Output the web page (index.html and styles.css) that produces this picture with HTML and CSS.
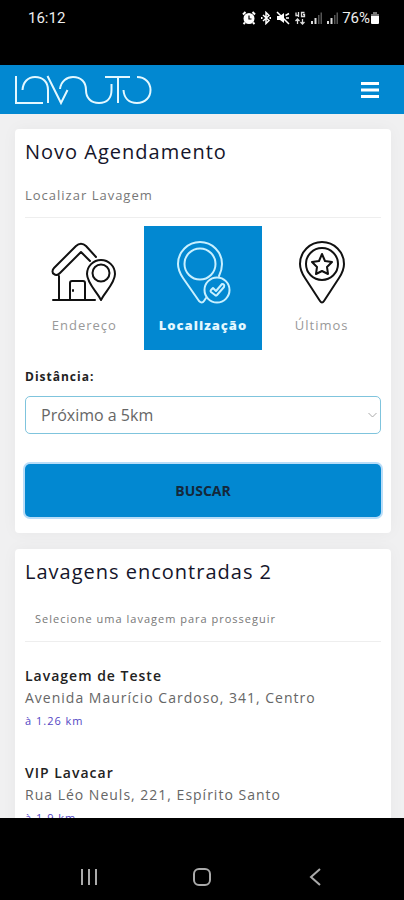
FILE: index.html
```html
<!DOCTYPE html>
<html lang="pt-BR">
<head>
<meta charset="utf-8">
<meta name="viewport" content="width=device-width, initial-scale=1">
<title>Lavauto - Novo Agendamento</title>
<link rel="stylesheet" href="styles.css">
</head>
<body>
<div class="status">
  <time>16:12</time>
  <div class="status-icons">
    <svg width="14" height="14" viewBox="0 0 14 14" fill="none" stroke="#fff"><circle cx="7" cy="7.500" r="4.500" fill="#fff" stroke-width="2"/><path d="M1 3.500 3.500 1M13 3.500 10.500 1M3 11.500 1.500 13M11 11.500 12.500 13" stroke-width="2"/><path d="M7 4.500V8H9.500" stroke="#000" stroke-width="1.200"/></svg>
    <svg width="12" height="14" viewBox="0 0 12 14" fill="none" stroke="#fff" stroke-width="1.500"><path d="M3 4 9 9.500 6 12.500V1.500L9 4.500 3 10"/><path d="M1 7h1.500M9.500 7H11" stroke-width="2"/></svg>
    <svg width="14" height="14" viewBox="0 0 14 14" fill="none" stroke="#fff" stroke-width="1.500"><path d="M1 5h3l4-3v10L4 9H1z" fill="#fff" stroke="none"/><path d="M1 1 13 13M9.500 4.500 13 2.500M10 7h3"/></svg>
    <svg width="12" height="14" viewBox="0 0 12 14" fill="none" stroke="#ddd" stroke-width="1.300"><path d="M2 1.500v3h3M4.500 1v5M10.500 1.500h-3v4h3v-2H9M3.500 13V8M1.500 10l2-2 2 2M8.500 8v5M6.500 11l2 2 2-2"/></svg>
    <svg width="12" height="14" viewBox="0 0 12 14"><path d="M1 10h2v3H1zM4.500 7h2v6h-2z" fill="#ddd"/><path d="M8 4h1.500v9H8zM10.500 1.500H12V13h-1.500z" fill="#555"/></svg>
    <svg width="12" height="14" viewBox="0 0 12 14"><path d="M1 10h2v3H1zM4.500 7h2v6h-2z" fill="#ddd"/><path d="M8 4h1.500v9H8zM10.500 1.500H12V13h-1.500z" fill="#555"/></svg>
    <span class="battery">76%<svg width="10" height="14" viewBox="0 0 10 14"><path d="M3 1h4v2h2v3H1V3h2z" fill="#777"/><path d="M1 5h8v7a1 1 0 0 1-1 1H2a1 1 0 0 1-1-1z" fill="#fff"/></svg></span>
  </div>
</div>

<header class="topbar">
  <a class="logo" href="#" aria-label="Lavauto">
    <svg width="138" height="31" viewBox="0 0 138 31" fill="none" stroke="#e4f8ff" stroke-width="2"><path d="M2 2V29H29M8.500 16C9 8 14 3 21 3 29 3 34 8 34 16V29M33.500 2 47 29 53.500 16M46 15C47 7 53 3 59 3 67 3 72 8 72 16 72 24 77 29 85 29 93 29 97.500 24 97.500 16V10M91 3H116M104 3V29M123 3C131 3 136.500 8.500 136.500 16 136.500 23.500 131 29 123 29 115 29 110 24 109.500 16"/></svg>
  </a>
  <button class="menu" type="button" aria-label="Menu">
    <svg width="20" height="18" viewBox="0 0 20 18"><path d="M1 1h18v3H1zM1 7.500h18v3H1zM1 14h18v3H1z" fill="#fff"/></svg>
  </button>
</header>

<main class="page">
  <section class="card">
    <h1>Novo Agendamento</h1>
    <p class="lead">Localizar Lavagem</p>
    <div class="tabs">
      <button class="tab" type="button">
        <svg width="66" height="66" viewBox="0 0 66 66" fill="none" stroke="#111" stroke-width="2" stroke-linecap="round" stroke-linejoin="round"><path d="M45 17 35 6C32 3 28 3 25 6L3 28C1 30 1 33 3 34 5 36 7 35 9 33L30 12 39 21M8 36V60M2 60H44M19 60V43Q19 41 21 41H32Q34 41 34 43V60M22 50V51"/><path d="M50 60C46 52 36 43 36 34A14 14 0 0 1 64 34C64 43 54 52 50 60Z"/><circle cx="50" cy="33" r="8.500"/></svg>
        <span>Endereço</span>
      </button>
      <button class="tab active" type="button" aria-pressed="true">
        <svg width="66" height="66" viewBox="0 0 66 66" fill="none" stroke="#c9f0ff" stroke-width="2" stroke-linecap="round" stroke-linejoin="round"><path d="M36 58 34 61Q32 64 29 61L13 38C9 32 8 28 8 24A22 22 0 0 1 52 24C52 28 51 32 49 36"/><circle cx="30" cy="24" r="15.500"/><circle cx="47" cy="50" r="12.500"/><path d="M41 50 43 48 46 51 52 44Q55 44 54 47L47 55Q46 56 45 55L41 52Q40 51 41 50Z"/></svg>
        <span>Localização</span>
      </button>
      <button class="tab" type="button">
        <svg width="66" height="66" viewBox="0 0 66 66" fill="none" stroke="#111" stroke-width="2" stroke-linecap="round" stroke-linejoin="round"><path d="M35 61Q33 64 31 61L16 38C12 32 11 28 11 24A22 22 0 0 1 55 24C55 28 54 32 50 38Z"/><circle cx="33" cy="24" r="16"/><path d="m33 14 3 7 7 1-5 5 1 7-6-3-6 3 1-7-5-5 7-1z"/></svg>
        <span>Últimos</span>
      </button>
    </div>
    <label class="field-label" for="distancia">Distância:</label>
    <div class="select-wrap">
      <select id="distancia"><option>Próximo a 5km</option></select>
      <svg class="chevron" width="9" height="6" viewBox="0 0 9 6" fill="none" stroke="#aaa"><path d="M.5 1 4.500 5 8.500 1"/></svg>
    </div>
    <button class="search" type="button">BUSCAR</button>
  </section>

  <section class="card">
    <h2>Lavagens encontradas 2</h2>
    <p class="hint">Selecione uma lavagem para prosseguir</p>
    <ul class="results">
      <li><strong>Lavagem de Teste</strong><span>Avenida Maurício Cardoso, 341, Centro</span><small>à 1.26 km</small></li>
      <li><strong>VIP Lavacar</strong><span>Rua Léo Neuls, 221, Espírito Santo</span><small>à 1.9 km</small></li>
    </ul>
  </section>
</main>

<nav class="sysnav" aria-label="Sistema">
  <button type="button" aria-label="Recentes"><svg width="20" height="20" viewBox="0 0 20 20" stroke="#aaa" stroke-width="2"><path d="M3 2V18M10 2V18M17 2V18"/></svg></button>
  <button type="button" aria-label="Início"><svg width="20" height="20" viewBox="0 0 20 20" fill="none" stroke="#aaa" stroke-width="2"><rect x="2" y="2" width="16" height="16" rx="5"/></svg></button>
  <button type="button" aria-label="Voltar"><svg width="20" height="20" viewBox="0 0 20 20" fill="none" stroke="#aaa" stroke-width="2"><path d="M15 2 6 10 15 18"/></svg></button>
</nav>
</body>
</html>
```
FILE: styles.css
```css
* { box-sizing: border-box; }

body {
  margin: 0;
  height: 100vh;
  display: flex;
  flex-direction: column;
  background: #000;
  color: #666;
  font-family: "Open Sans", sans-serif;
  font-size: 14px;
  letter-spacing: 1px;
}

button {
  margin: 0;
  padding: 0;
  border: 0;
  background: none;
  font: inherit;
  letter-spacing: inherit;
  color: inherit;
}

svg { display: block; }

h1, h2, p, ul { margin: 0; padding: 0; }

.status {
  flex: none;
  height: 65px;
  padding: 8px 24px 0 28px;
  display: flex;
  justify-content: space-between;
  align-items: flex-start;
  color: #eee;
  font: 400 15px/20px Roboto, sans-serif;
  letter-spacing: 0;
}

.status-icons, .battery {
  display: flex;
  align-items: center;
}

.status-icons { gap: 4px; }

.topbar {
  flex: none;
  height: 49px;
  padding: 0 24px 0 14px;
  display: flex;
  align-items: center;
  justify-content: space-between;
  background: #0288d1;
}

.page {
  flex: 1;
  min-height: 0;
  overflow: hidden;
  padding: 15px 13px 0 15px;
  display: flex;
  flex-direction: column;
  gap: 16px;
  background: #f0f0f1;
}

.card {
  flex: none;
  padding: 8px 10px 16px;
  border-radius: 4px;
  background: #fff;
  box-shadow: 0 0 16px rgba(0, 0, 0, 0.04);
}

h1, h2 {
  color: #15152b;
  font-size: 20px;
  font-weight: 400;
  line-height: 30px;
}

.lead, .hint {
  border-bottom: 1px solid #eee;
  color: #777;
}

.lead {
  margin-top: 18px;
  padding-bottom: 12px;
  font-size: 13px;
  line-height: 20px;
}

.hint {
  margin-top: 22px;
  padding: 0 10px 12px;
  font-size: 11px;
  line-height: 20px;
}

.tabs {
  margin-top: 8px;
  display: grid;
  grid-template-columns: repeat(3, 1fr);
}

.tab {
  height: 124px;
  padding: 0 0 15px;
  display: flex;
  flex-direction: column;
  align-items: center;
  justify-content: flex-end;
  gap: 9px;
  color: #999;
  font-size: 13px;
  line-height: 20px;
}

.active {
  background: #0288d1;
  color: #e4f8ff;
  font-weight: 800;
}

.field-label {
  display: block;
  margin: 17px 0 9px;
  color: #222;
  font-size: 12px;
  font-weight: 700;
  line-height: 20px;
}

.select-wrap { position: relative; }

select {
  width: 100%;
  height: 38px;
  padding: 0 15px;
  appearance: none;
  border: 1px solid #7fc4dd;
  border-radius: 5px;
  background: #fff;
  color: #666;
  font: 16px "Open Sans", sans-serif;
}

.chevron {
  position: absolute;
  top: 16px;
  right: 4px;
  pointer-events: none;
}

.search {
  width: 100%;
  height: 53px;
  margin-top: 30px;
  display: block;
  border-radius: 5px;
  background: #0288d1;
  box-shadow: 0 0 0 2px #b9ddf8;
  color: #14283c;
  font-size: 14px;
  font-weight: 700;
  letter-spacing: 0;
}

.results {
  padding-top: 23px;
  display: grid;
  gap: 29px;
  list-style: none;
}

.results li {
  display: flex;
  flex-direction: column;
  line-height: 22px;
}

.results strong {
  color: #222;
  font-weight: 600;
}

.results small {
  color: #5346c4;
  font-size: 11px;
  line-height: 24px;
}

.sysnav {
  flex: none;
  height: 82px;
  padding: 49px 32px 0;
  display: grid;
  grid-template-columns: repeat(3, 1fr);
  justify-items: center;
  align-items: start;
}
```
